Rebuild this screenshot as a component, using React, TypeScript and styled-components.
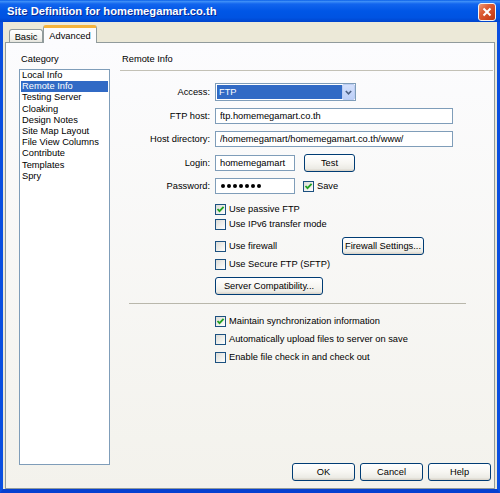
import styled, { createGlobalStyle } from 'styled-components'

const GlobalStyle = createGlobalStyle`
  html, body {
    margin: 0;
    padding: 0;
    background: #fff;
  }
  body {
    font-family: "Liberation Sans", Arial, sans-serif;
  }
`

const Window = styled.div`
  width: 500px;
  height: 493px;
  display: flex;
  flex-direction: column;
  overflow: hidden;
  font-family: "Liberation Sans", Arial, sans-serif;
  font-size: 9.3px;
  color: #000;
`

const TitleBar = styled.div`
  height: 22px;
  flex: none;
  display: flex;
  align-items: center;
  justify-content: space-between;
  padding: 0 4px 0 7px;
  background: linear-gradient(
    to bottom,
    #0a5fe8 0%,
    #3d8ef7 7%,
    #1265ee 18%,
    #0056e6 50%,
    #0053e2 80%,
    #0044cc 100%
  );
  color: #fff;
  font-weight: bold;
  font-size: 11.2px;
  text-shadow: 1px 1px 0 #0a2a95;
`

const CloseButton = styled.div`
  width: 18px;
  height: 18px;
  margin-top: 2px;
  box-sizing: border-box;
  border: 1px solid #f4f4f4;
  border-radius: 3px;
  background: linear-gradient(135deg, #ec9a7a 0%, #dd5f37 35%, #cf4720 70%, #b9370f 100%);
  display: flex;
  align-items: center;
  justify-content: center;
`

const Frame = styled.div`
  flex: 1;
  display: flex;
  flex-direction: column;
  min-height: 0;
  background: #ece9d8;
  border-left: 3px solid #0a4fe0;
  border-right: 3px solid #0a4fe0;
  border-bottom: 4px solid #0640d0;
  padding: 0 2px;
`

const TabStrip = styled.div`
  height: 20px;
  flex: none;
  display: flex;
  align-items: flex-end;
  padding-left: 4px;
`

const Tab = styled.div<{ $active?: boolean }>`
  box-sizing: border-box;
  display: flex;
  align-items: center;
  justify-content: center;
  border: 1px solid #919b9c;
  border-bottom: none;
  border-radius: 3px 3px 0 0;
  position: relative;
  width: ${p => (p.$active ? 54 : 34)}px;
  height: ${p => (p.$active ? 18 : 13)}px;
  margin-bottom: ${p => (p.$active ? -1 : 0)}px;
  z-index: ${p => (p.$active ? 1 : 0)};
  background: ${p =>
    p.$active ? '#fcfcfe' : 'linear-gradient(#ffffff, #f3f3ef 70%, #e5e4dc)'};
  border-top: ${p => (p.$active ? '3px solid #f5b33c' : '1px solid #919b9c')};
  padding-top: ${p => (p.$active ? 0 : 1)}px;
`

const Panel = styled.div`
  flex: 1;
  min-height: 0;
  border: 1px solid #919b9c;
  background: linear-gradient(#fcfcfe, #f3f2ec);
  display: grid;
  grid-template-columns: 114px 1fr;
`

const LeftColumn = styled.div`
  padding-left: 13px;
`

const CategoryLabel = styled.div`
  padding: 10px 0 0 2px;
  line-height: 12px;
`

const CategoryList = styled.ul`
  margin: 4px 0 0;
  padding: 0 1px;
  list-style: none;
  width: 91px;
  height: 396px;
  box-sizing: border-box;
  border: 1px solid #7f9db9;
  background: #fff;
`

const CategoryItem = styled.li<{ $selected?: boolean }>`
  height: 11.2px;
  line-height: 11.2px;
  padding-left: 1px;
  white-space: nowrap;
  background: ${p => (p.$selected ? '#316ac5' : 'transparent')};
  color: ${p => (p.$selected ? '#fff' : '#000')};
`

const RightColumn = styled.div`
  display: flex;
  flex-direction: column;
  min-height: 0;
`

const Heading = styled.div`
  padding: 10px 0 5px 2px;
  line-height: 12px;
  margin-right: 1px;
  border-bottom: 1px solid #c3c1b6;
`

const Form = styled.div`
  display: grid;
  grid-template-columns: 90px 1fr;
  grid-auto-rows: 18px;
  column-gap: 5px;
  row-gap: 5.5px;
  align-items: center;
  margin-top: 12px;
`

const Label = styled.label`
  text-align: right;
  white-space: nowrap;
`

const Field = styled.div`
  display: flex;
  align-items: center;
`

const TextInput = styled.input<{ $w: number }>`
  width: ${p => p.$w}px;
  height: 16px;
  box-sizing: border-box;
  border: 1px solid #7f9db9;
  background: #fff;
  padding: 0 4px;
  margin: 0;
  font: inherit;
  color: #000;
  outline: none;
`

const PasswordBox = styled.div`
  width: 80px;
  height: 16px;
  box-sizing: border-box;
  border: 1px solid #7f9db9;
  background: #fff;
  padding-left: 5px;
  display: flex;
  align-items: center;
  gap: 2px;
`

const Dot = styled.span`
  width: 4px;
  height: 4px;
  border-radius: 50%;
  background: #000;
`

const Select = styled.div`
  width: 141px;
  height: 18px;
  box-sizing: border-box;
  border: 1px solid #7f9db9;
  background: #fff;
  padding: 1px 0 1px 1px;
  display: flex;
`

const SelectValue = styled.div`
  flex: 1;
  background: #316ac5;
  color: #fff;
  padding-left: 2px;
  display: flex;
  align-items: center;
`

const SelectArrow = styled.div`
  width: 13px;
  margin-top: -1px;
  margin-bottom: -1px;
  box-sizing: border-box;
  border: 1px solid #bccdf3;
  border-radius: 2px;
  background: linear-gradient(#d4e0fb, #bccff8);
  display: flex;
  align-items: center;
  justify-content: center;
`

const Button = styled.button<{ $w: number; $ml?: number }>`
  width: ${p => p.$w}px;
  height: 18px;
  margin: 0 0 0 ${p => p.$ml ?? 0}px;
  padding: 0;
  box-sizing: border-box;
  border: 1px solid #003c74;
  border-radius: 3px;
  background: linear-gradient(#ffffff 0%, #f7f6f2 50%, #ecebe5 85%, #d6d0c5 100%);
  font: inherit;
  color: #000;
  display: flex;
  align-items: center;
  justify-content: center;
  white-space: nowrap;
`

const Options = styled.div`
  margin-left: 95px;
  display: flex;
  flex-direction: column;
`

const CheckRow = styled.label<{ $mt: number; $ml?: number }>`
  display: flex;
  align-items: center;
  gap: 3px;
  height: 14px;
  margin-top: ${p => p.$mt}px;
  margin-left: ${p => p.$ml ?? 0}px;
  white-space: nowrap;
`

const FirewallRow = styled.div`
  display: grid;
  grid-template-columns: 127px auto;
  align-items: center;
  height: 18px;
  margin-top: 6px;
`

const Box = styled.span`
  width: 11px;
  height: 11px;
  flex: none;
  box-sizing: border-box;
  border: 1px solid #1c5180;
  background: linear-gradient(135deg, #dcdcd7 0%, #f4f4f1 70%, #ffffff 100%);
  display: flex;
  align-items: center;
  justify-content: center;
`

const Separator = styled.div`
  height: 1px;
  background: #b9b7ab;
  margin: 8px 28px 0 9px;
`

const Footer = styled.div`
  margin-top: auto;
  display: flex;
  justify-content: flex-end;
  gap: 5px;
  padding: 0 3px 7px 0;
`

function CheckBox({ checked }: { checked?: boolean }) {
  return (
    <Box>
      {checked && (
        <svg width="9" height="9" viewBox="0 0 9 9">
          <path d="M1.5 4 L3.5 6.2 L7.6 1.8" fill="none" stroke="#21a121" strokeWidth="1.8" />
        </svg>
      )}
    </Box>
  )
}

const categories = [
  'Local Info',
  'Remote Info',
  'Testing Server',
  'Cloaking',
  'Design Notes',
  'Site Map Layout',
  'File View Columns',
  'Contribute',
  'Templates',
  'Spry'
]

export default function App() {
  return (
    <Window>
      <GlobalStyle />
      <TitleBar>
        <span>Site Definition for homemegamart.co.th</span>
        <CloseButton>
          <svg width="10" height="10" viewBox="0 0 10 10">
            <path d="M1.5 1.5 L8.5 8.5 M8.5 1.5 L1.5 8.5" stroke="#fff" strokeWidth="2" />
          </svg>
        </CloseButton>
      </TitleBar>
      <Frame>
        <TabStrip>
          <Tab>Basic</Tab>
          <Tab $active>Advanced</Tab>
        </TabStrip>
        <Panel>
          <LeftColumn>
            <CategoryLabel>Category</CategoryLabel>
            <CategoryList>
              {categories.map(c => (
                <CategoryItem key={c} $selected={c === 'Remote Info'}>
                  {c}
                </CategoryItem>
              ))}
            </CategoryList>
          </LeftColumn>
          <RightColumn>
            <Heading>Remote Info</Heading>
            <Form>
              <Label>Access:</Label>
              <Field>
                <Select>
                  <SelectValue>FTP</SelectValue>
                  <SelectArrow>
                    <svg width="7" height="5" viewBox="0 0 7 5">
                      <path d="M0.8 1 L3.5 3.8 L6.2 1" fill="none" stroke="#4d6185" strokeWidth="1.6" />
                    </svg>
                  </SelectArrow>
                </Select>
              </Field>
              <Label>FTP host:</Label>
              <Field>
                <TextInput $w={238} readOnly value="ftp.homemegamart.co.th" />
              </Field>
              <Label>Host directory:</Label>
              <Field>
                <TextInput $w={238} readOnly value="/homemegamart/homemegamart.co.th/www/" />
              </Field>
              <Label>Login:</Label>
              <Field>
                <TextInput $w={80} readOnly value="homemegamart" />
                <Button $w={51} $ml={9}>Test</Button>
              </Field>
              <Label>Password:</Label>
              <Field>
                <PasswordBox>
                  {Array.from({ length: 7 }).map((_, i) => (
                    <Dot key={i} />
                  ))}
                </PasswordBox>
                <CheckRow $mt={0} $ml={8}>
                  <CheckBox checked />
                  Save
                </CheckRow>
              </Field>
            </Form>
            <Options>
              <CheckRow $mt={7}>
                <CheckBox checked />
                Use passive FTP
              </CheckRow>
              <CheckRow $mt={1}>
                <CheckBox />
                Use IPv6 transfer mode
              </CheckRow>
              <FirewallRow>
                <CheckRow $mt={0}>
                  <CheckBox />
                  Use firewall
                </CheckRow>
                <Button $w={82}>Firewall Settings...</Button>
              </FirewallRow>
              <CheckRow $mt={2}>
                <CheckBox />
                Use Secure FTP (SFTP)
              </CheckRow>
              <div style={{ marginTop: 6 }}>
                <Button $w={108}>Server Compatibility...</Button>
              </div>
            </Options>
            <Separator />
            <Options>
              <CheckRow $mt={10}>
                <CheckBox checked />
                Maintain synchronization information
              </CheckRow>
              <CheckRow $mt={4}>
                <CheckBox />
                Automatically upload files to server on save
              </CheckRow>
              <CheckRow $mt={4}>
                <CheckBox />
                Enable file check in and check out
              </CheckRow>
            </Options>
            <Footer>
              <Button $w={63}>OK</Button>
              <Button $w={63}>Cancel</Button>
              <Button $w={63}>Help</Button>
            </Footer>
          </RightColumn>
        </Panel>
      </Frame>
    </Window>
  )
}
